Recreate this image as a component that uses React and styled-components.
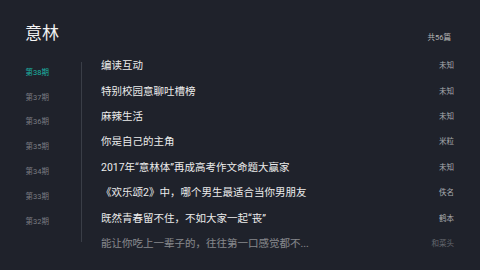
import React from 'react';
import styled, { createGlobalStyle } from 'styled-components';

const GlobalStyle = createGlobalStyle`
  html, body {
    margin: 0;
    padding: 0;
    background: #1f222b;
  }
  body {
    font-family: Roboto, "Noto Sans CJK SC", sans-serif;
  }
`;

const Page = styled.div`
  width: 480px;
  height: 270px;
  box-sizing: border-box;
  background: #1f222b;
  padding-top: 23px;
  overflow: hidden;
`;

const Header = styled.div`
  display: flex;
  justify-content: space-between;
  align-items: flex-start;
  height: 29px;
  padding: 0 29px 0 25px;
`;

const Title = styled.h1`
  margin: 0;
  font-size: 17px;
  line-height: 20px;
  font-weight: 400;
  color: #f2f2f2;
`;

const Count = styled.span`
  margin-top: 10px;
  font-size: 7.5px;
  line-height: 10px;
  color: #b4b4b4;
`;

const Body = styled.div`
  display: flex;
  align-items: flex-start;
`;

const Sidebar = styled.ul`
  list-style: none;
  margin: 10px 0 0;
  padding: 5.7px 0 0 25.5px;
  box-sizing: border-box;
  width: 82px;
  height: 180px;
  border-right: 1px solid #3a3e47;
  display: flex;
  flex-direction: column;
  gap: 14.83px;
`;

const Period = styled.li`
  font-size: 7.5px;
  line-height: 10px;
  color: ${p => (p.$active ? '#1cb5a3' : '#7a7c82')};
`;

const List = styled.ul`
  list-style: none;
  margin: 0;
  padding: 0 26px 0 19px;
  flex: 1;
  display: flex;
  flex-direction: column;
`;

const Row = styled.li`
  display: flex;
  justify-content: space-between;
  align-items: center;
  height: 25.4px;
  opacity: ${p => (p.$dim ? 0.5 : 1)};
`;

const ArticleTitle = styled.span`
  font-size: 10.5px;
  color: #ececec;
  white-space: nowrap;
`;

const Author = styled.span`
  font-size: 7.5px;
  color: #a9abaf;
`;

const periods = ['第38期', '第37期', '第36期', '第35期', '第34期', '第33期', '第32期'];

const articles = [
  { title: '编读互动', author: '未知' },
  { title: '特别校园意聊吐槽榜', author: '未知' },
  { title: '麻辣生活', author: '未知' },
  { title: '你是自己的主角', author: '米粒' },
  { title: '2017年“意林体”再成高考作文命题大赢家', author: '未知' },
  { title: '《欢乐颂2》中，哪个男生最适合当你男朋友', author: '佚名' },
  { title: '既然青春留不住，不如大家一起“丧”', author: '鹤本' },
  { title: '能让你吃上一辈子的，往往第一口感觉都不...', author: '和菜头' },
];

export default function App() {
  return (
    <Page>
      <GlobalStyle />
      <Header>
        <Title>意林</Title>
        <Count>共56篇</Count>
      </Header>
      <Body>
        <Sidebar>
          {periods.map((p, i) => (
            <Period key={p} $active={i === 0}>{p}</Period>
          ))}
        </Sidebar>
        <List>
          {articles.map((a, i) => (
            <Row key={i} $dim={i === articles.length - 1}>
              <ArticleTitle>{a.title}</ArticleTitle>
              <Author>{a.author}</Author>
            </Row>
          ))}
        </List>
      </Body>
    </Page>
  );
}
